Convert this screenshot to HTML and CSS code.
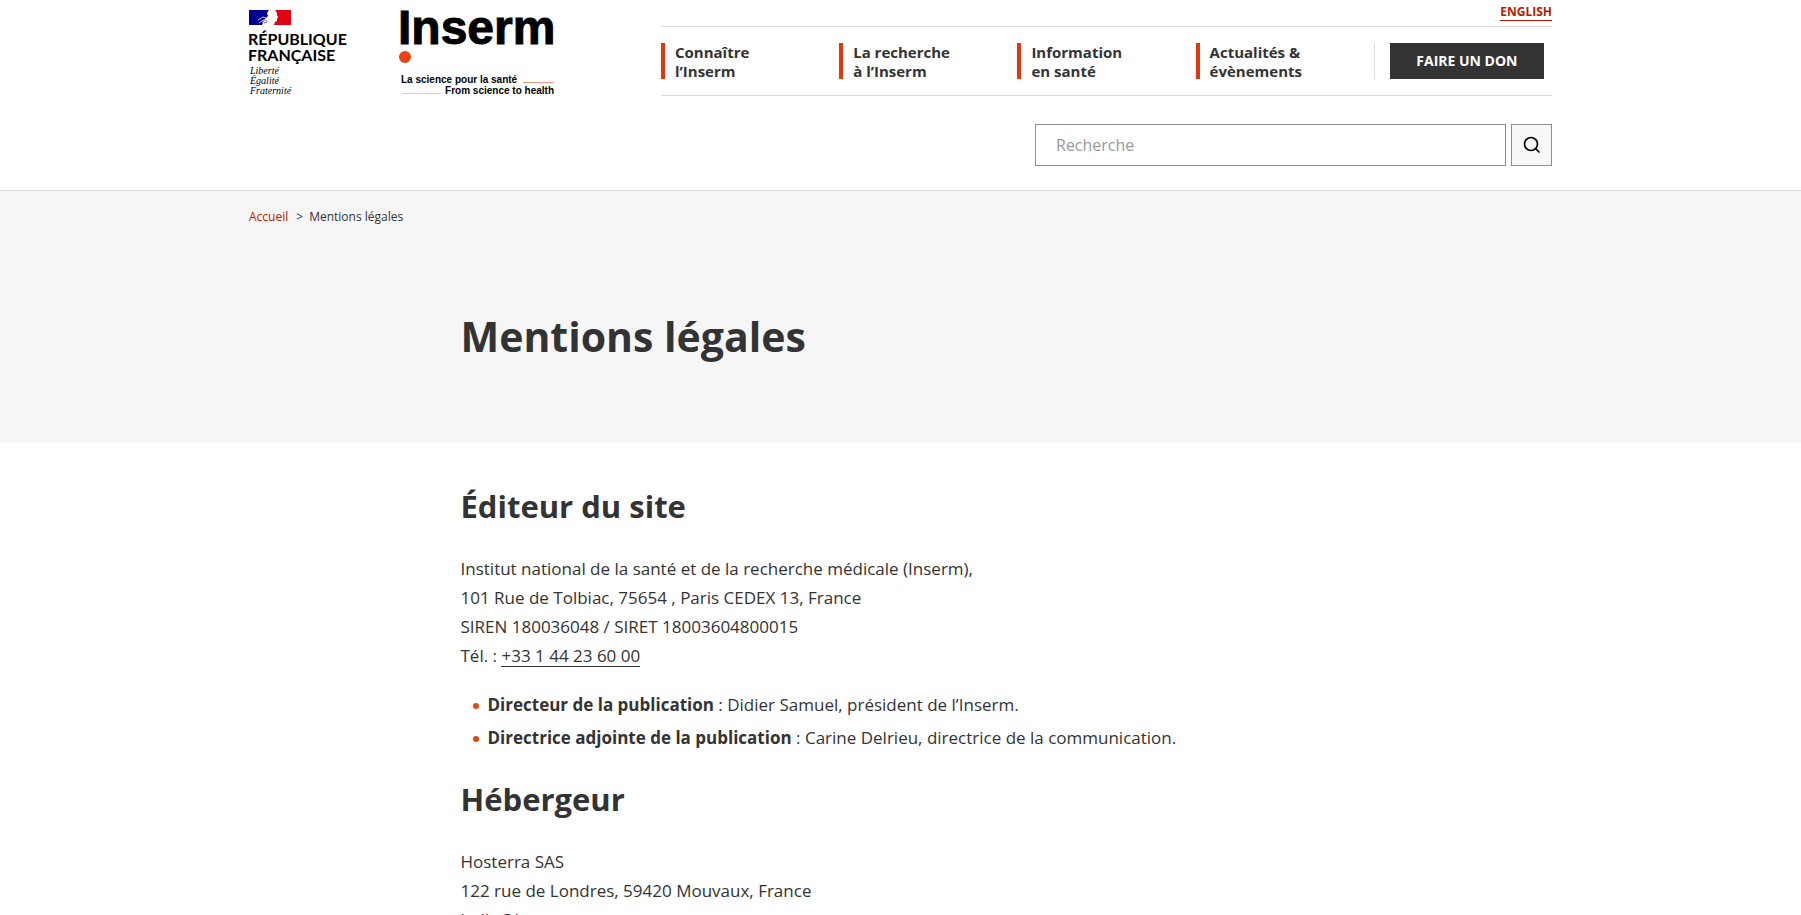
FILE: index.html
```html
<!DOCTYPE html>
<html lang="fr">

<head>
  <meta charset="UTF-8">
  <meta name="viewport" content="width=device-width, initial-scale=1.0">
  <title>Mentions légales - Inserm</title>
  <link rel="stylesheet" href="styles.css">
</head>

<body>
  <header class="site-header">
    <div class="container">
      <div class="header-top">
        <a href="#" class="logos" aria-label="Inserm, accueil">
          <svg class="logo-rf" width="104" height="84" viewBox="0 0 104 84" role="img" aria-label="République Française">
            <path fill="#000091" d="M0 0h20l-2 3 1 3-4 4-2 5H0z" />
            <path fill="#e1000f" d="M26 0h16v15H25l1-3 2-1v-2l1-2-1-2V3z" />
            <path fill="none" stroke="#c9c9ee" d="M9 10l5-3 3 1M10 13l4-3 3 1M13 12l3 1" />
            <path fill="none" stroke="#7878b8" d="M17 10l1 2-3 1" />
            <text class="rf-name" x="-1" y="35">RÉPUBLIQUE</text>
            <text class="rf-name" x="-1" y="51">FRANÇAISE</text>
            <text class="rf-motto" x="1" y="64">Liberté</text>
            <text class="rf-motto" x="1" y="74">Égalité</text>
            <text class="rf-motto" x="1" y="84">Fraternité</text>
          </svg>
          <svg class="logo-inserm" width="155" height="84" viewBox="0 0 155 84" role="img" aria-label="Inserm">
            <text class="inserm-name" x="-3" y="34">Inserm</text>
            <circle cx="4" cy="47" r="6" fill="#e84311" />
            <text class="inserm-tag" x="0" y="73">La science pour la santé</text>
            <text class="inserm-tag" x="153" y="84" text-anchor="end">From science to health</text>
            <path stroke="#f4957a" d="M122 72.500h31" />
            <path stroke="#f9c3b4" d="M1 83.500h38" />
          </svg>
        </a>
        <div class="header-nav">
          <div class="lang"><a href="#">ENGLISH</a></div>
          <nav class="main-nav">
            <button type="button">Connaître<br>l’Inserm</button>
            <button type="button">La recherche<br>à l’Inserm</button>
            <button type="button">Information<br>en santé</button>
            <button type="button">Actualités &amp;<br>évènements</button>
            <div class="donate"><a href="#">FAIRE UN DON</a></div>
          </nav>
        </div>
      </div>
      <form class="search">
        <input type="search" placeholder="Recherche" aria-label="Recherche">
        <button type="submit" aria-label="Rechercher">
          <svg width="18" height="18" viewBox="0 0 18 18" fill="none" stroke="#000" stroke-width="1.700">
            <circle cx="8" cy="8" r="6.500" />
            <path d="M12.500 12.500l4 4" />
          </svg>
        </button>
      </form>
    </div>
  </header>

  <main>
    <div class="page-banner">
      <div class="container">
        <nav class="breadcrumb" aria-label="Fil d’Ariane">
          <a href="#">Accueil</a><span class="sep">&gt;</span><span>Mentions légales</span>
        </nav>
        <h1 class="column">Mentions légales</h1>
      </div>
    </div>

    <div class="container">
      <article class="column content">
        <h2>Éditeur du site</h2>
        <p>
          Institut national de la santé et de la recherche médicale (Inserm),<br>
          101 Rue de Tolbiac, 75654 , Paris CEDEX 13, France<br>
          SIREN 180036048 / SIRET 18003604800015<br>
          Tél. : <a href="tel:+33144236000">+33 1 44 23 60 00</a>
        </p>
        <ul>
          <li><strong>Directeur de la publication</strong> : Didier Samuel, président de l’Inserm.</li>
          <li><strong>Directrice adjointe de la publication</strong> : Carine Delrieu, directrice de la communication.</li>
        </ul>
        <h2>Hébergeur</h2>
        <p>
          Hosterra SAS<br>
          122 rue de Londres, 59420 Mouvaux, France<br>
          hello@hosterra.eu
        </p>
      </article>
    </div>
  </main>
</body>

</html>
```
FILE: styles.css
```css
* {
  box-sizing: border-box;
}

body {
  margin: 0;
  font-family: "Open Sans", Arial, sans-serif;
  font-size: 17px;
  line-height: 29px;
  color: #333;
  background-color: #fff;
}

.container {
  max-width: 1303px;
  margin: 0 auto;
}

.column {
  max-width: 880px;
  margin: 0 auto;
}

/* Header */
.site-header {
  border-bottom: 1px solid #dcdcdc;
}

.header-top {
  display: flex;
  justify-content: space-between;
}

.logos {
  display: flex;
  gap: 48px;
  padding-top: 10px;
}

.logos svg {
  overflow: visible;
}

.rf-name {
  font-family: Lato, sans-serif;
  font-size: 16px;
  font-weight: bold;
}

.rf-motto {
  font-family: "Liberation Serif", serif;
  font-size: 10px;
  font-style: italic;
}

.inserm-name {
  font-family: "Liberation Sans", Arial, sans-serif;
  font-size: 48px;
  font-weight: bold;
  stroke: #000;
  stroke-width: 1px;
}

.inserm-tag {
  font-family: "Liberation Sans", Arial, sans-serif;
  font-size: 10px;
  font-weight: bold;
}

.header-nav {
  width: 891px;
}

.lang {
  height: 26px;
  font-size: 12px;
  font-weight: bold;
  line-height: 16px;
  text-align: right;
  padding-top: 4px;
}

.lang a {
  display: inline-block;
  color: #b61a00;
  text-decoration: none;
  border-bottom: 1px solid #b61a00;
}

.main-nav {
  display: grid;
  grid-template-columns: repeat(5, 1fr);
  padding: 16px 0;
  border-top: 1px solid #dcdcdc;
  border-bottom: 1px solid #dcdcdc;
}

.main-nav button {
  height: 36px;
  padding: 0 0 0 10px;
  border: none;
  border-left: 4px solid #e0370d;
  background: none;
  font-family: inherit;
  font-size: 15px;
  font-weight: bold;
  line-height: 19px;
  text-align: left;
  color: #333;
  cursor: pointer;
}

.donate {
  padding: 0 8px 0 15px;
  border-left: 1px solid #dcdcdc;
}

.donate a {
  display: block;
  background-color: #333;
  color: #fff;
  font-size: 14px;
  font-weight: bold;
  line-height: 36px;
  text-align: center;
  text-decoration: none;
}

.search {
  display: flex;
  justify-content: flex-end;
  gap: 5px;
  padding: 28px 0 24px;
}

.search input {
  width: 471px;
  height: 42px;
  padding: 0 20px;
  border: 1px solid #8f8f8f;
  border-radius: 0;
  font-family: inherit;
  font-size: 16px;
  color: #333;
}

.search input::placeholder {
  color: #999;
}

.search button {
  display: flex;
  align-items: center;
  justify-content: center;
  width: 41px;
  height: 42px;
  padding: 0;
  border: 1px solid #8f8f8f;
  background-color: #f7f7f7;
  cursor: pointer;
}

/* Title banner */
.page-banner {
  padding: 16px 0 78px;
  background-color: #f6f6f6;
}

.breadcrumb {
  font-size: 12px;
  line-height: 20px;
}

.breadcrumb a {
  color: #b61a00;
  text-decoration: none;
}

.breadcrumb .sep {
  margin: 0 6px 0 8px;
}

h1.column {
  margin-top: 80px;
  font-size: 41px;
  line-height: 58px;
}

/* Content */
.content {
  padding-top: 39px;
}

.content h2 {
  margin: 0 0 24px;
  font-size: 31px;
  line-height: 48px;
}

.content p {
  margin: 0 0 20px;
}

.content p a {
  display: inline-block;
  line-height: 20px;
  color: inherit;
  text-decoration: none;
  border-bottom: 1px solid #333;
}

.content ul {
  margin: 0 0 23px;
  padding-left: 27px;
  list-style: none;
}

.content li {
  margin-bottom: 4px;
}

.content li::before {
  content: "";
  display: inline-block;
  width: 6px;
  height: 6px;
  margin-left: -15px;
  margin-right: 9px;
  border-radius: 50%;
  background-color: #e84311;
  vertical-align: middle;
}
```
